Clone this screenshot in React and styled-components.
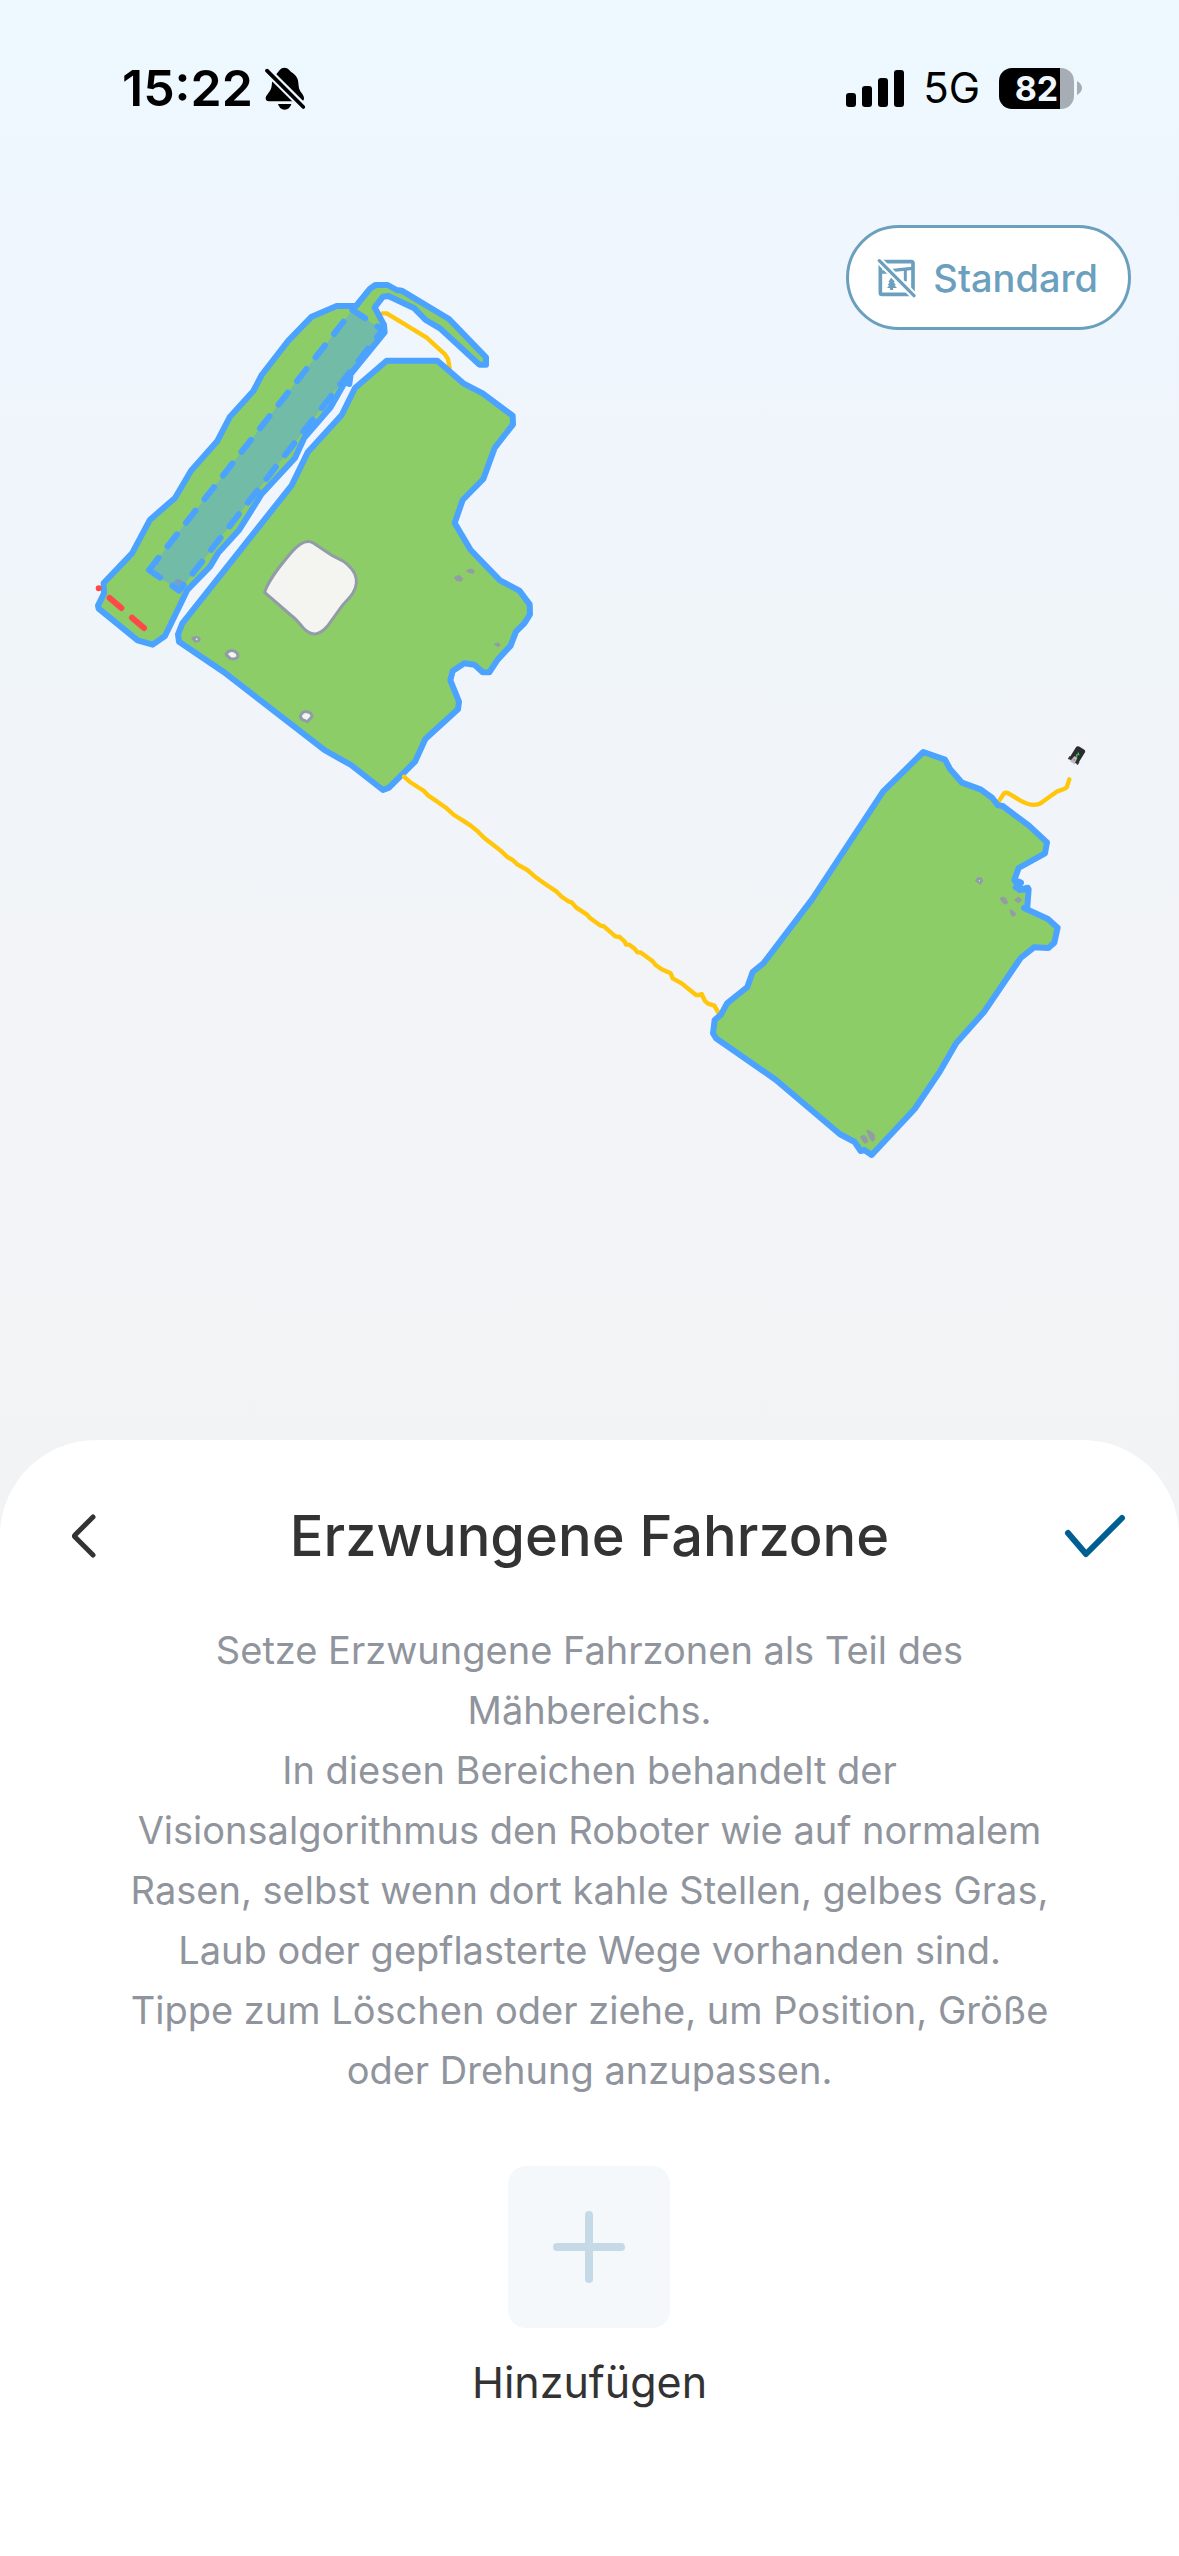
import styled, { createGlobalStyle } from "styled-components";

const GlobalStyle = createGlobalStyle`
  * { box-sizing: border-box; }
  body { margin: 0; }
  button { border: 0; padding: 0; background: none; font: inherit; cursor: pointer; }
`;

const Page = styled.div`
  display: flex;
  flex-direction: column;
  min-height: 100vh;
  font-family: Inter, "Open Sans", sans-serif;
  color: #333333;
  background: linear-gradient(#edf9ff 0, #eff6fd 240px, #f0f5fa 640px, #f2f4f7 1000px, #f2f3f5 1440px);
`;

const Stage = styled.main`
  display: grid;
`;

const MapCanvas = styled.svg`
  grid-area: 1 / 1;
  display: block;
  width: 100%;
  height: auto;
`;

const Overlay = styled.div`
  grid-area: 1 / 1;
  display: flex;
  flex-direction: column;
  gap: 107px;
  padding-top: 58px;
`;

const StatusBar = styled.div`
  display: flex;
  align-items: center;
  justify-content: space-between;
  height: 60px;
  padding: 0 97px 0 122px;
  color: #000000;
`;

const StatusGroup = styled.div`
  display: flex;
  align-items: center;
  gap: ${(p) => p.$gap}px;
`;

const Clock = styled.span`
  font-size: 50px;
  font-weight: 600;
`;

const Network = styled.span`
  font-size: 42px;
  line-height: 60px;
`;

const Battery = styled.span`
  display: flex;
  align-items: center;
  gap: 3px;
`;

const BatteryBody = styled.span`
  width: 75px;
  height: 41px;
  border-radius: 13px;
  text-align: center;
  font-size: 34px;
  font-weight: 700;
  line-height: 41px;
  color: #f0f8ff;
  background: linear-gradient(90deg, #000000 82%, #a6adb5 82%);
`;

const ModeRow = styled.div`
  display: flex;
  justify-content: flex-end;
  padding: 0 48px;
`;

const ModeButton = styled.button`
  display: flex;
  align-items: center;
  gap: 16px;
  height: 105px;
  && {
    padding: 0 30px 0 28px;
    border: 3px solid #6aa0bd;
    background: #ffffff;
    font-size: 38px;
    font-weight: 500;
  }
  border-radius: 53px;
  color: #6aa0bd;
`;

const Sheet = styled.section`
  flex: 1;
  display: flex;
  flex-direction: column;
  align-items: center;
  padding: 56px 48px 96px;
  border-radius: 96px 96px 0 0;
  background: #ffffff;
`;

const SheetHeader = styled.header`
  display: flex;
  align-items: center;
  justify-content: space-between;
  align-self: stretch;
  height: 80px;
`;

const Title = styled.h1`
  margin: 0;
  font-size: 56px;
  font-weight: 500;
  line-height: 80px;
`;

const IconButton = styled.button`
  display: flex;
  align-items: center;
  justify-content: center;
  width: 72px;
  height: 72px;
`;

const Description = styled.p`
  margin: 44px 0 66px;
  font-size: 38px;
  line-height: 60px;
  text-align: center;
  color: #90949c;
`;

const AddButton = styled.button`
  display: flex;
  flex-direction: column;
  align-items: center;
  gap: 24px;
  && {
    font-size: 43px;
    line-height: 60px;
  }
  color: #333333;
`;

const AddTile = styled.span`
  display: flex;
  align-items: center;
  justify-content: center;
  width: 162px;
  height: 162px;
  border-radius: 18px;
  background: #f4f8fb;
`;

const BellOff = () => (
  <svg width="40" height="44" viewBox="0 0 120 132" aria-label="Stumm">
    <path d="M36 22C43 15 46 5 58 5S73 14 82 20C99 31 100 44 101 60C102 78 117 84 117 97Q117 106 108 106H12Q2 106 2 97C2 86 18 78 20 60Q20 42 36 22Z" />
    <path d="M39 114H79Q74 131 59 131T39 114Z" />
    <path d="M6 14L117 124" stroke="#eef7ff" strokeWidth="24" />
    <path d="M6 14L115 123" stroke="#000" strokeWidth="11" strokeLinecap="round" />
  </svg>
);

const Signal = () => (
  <svg width="58" height="37" viewBox="0 0 58 37" aria-label="Signal">
    <rect x="0" y="23" width="10" height="14" rx="3" />
    <rect x="16" y="16" width="10" height="21" rx="3" />
    <rect x="32" y="8" width="10" height="29" rx="3" />
    <rect x="48" y="0" width="10" height="37" rx="3" />
  </svg>
);

const ModeIcon = () => (
  <svg width="40" height="40" viewBox="166 174 120 120" fill="none" stroke="#6aa0bd">
    <rect x="176" y="185" width="98" height="98" rx="5" strokeWidth="11" />
    <path d="M214 211L272 205M178 216H200" strokeWidth="10" />
    <path d="M251 208V244" strokeWidth="9" />
    <path
      d="M209 232L220 246H216L223 256H218L226 264H214V270H205V264H196L203 256H198L204 246H200Z"
      fill="#6aa0bd"
      stroke="none"
    />
    <path d="M166 175L283 293" stroke="#fff" strokeWidth="22" />
    <path d="M173 182L277 287" strokeWidth="10" strokeLinecap="round" />
  </svg>
);

const BLUE = "#4ca2ff";
const GREEN = "#8ccd68";
const GREY = "#929ca6";
const YELLOW = "#ffc60c";

const zoneStyle = { fill: GREEN, stroke: BLUE, strokeWidth: 18, strokeLinejoin: "round" };
const routeStyle = { fill: "none", stroke: YELLOW, strokeWidth: 13, strokeLinejoin: "round", strokeLinecap: "round" };

const strip =
  "820,138 770,138 695,170 625,242 545,345 520,393 450,470 412,543 333,632 285,714 210,779 156,880 71,969 72,1000 54,1037 56,1046 173,1141 218,1154 255,1128 322,990 390,920 415,878 478,809 545,702 645,594 673,533 752,442 795,366 808,372 812,342 914,217 912,195 884,142 909,110 925,108 1003,145 1037,180 1080,205 1198,314 1218,314 1218,292 1107,177 965,92 950,90 923,75 886,75 870,86 828,138";

const mainLawn =
  "920,302 1072,302 1150,370 1208,400 1298,467 1299,493 1244,564 1210,657 1148,720 1124,789 1172,870 1260,961 1318,992 1349,1033 1350,1063 1333,1090 1308,1115 1292,1157 1253,1199 1228,1237 1208,1237 1183,1214 1153,1210 1118,1233 1111,1261 1137,1325 1134,1348 1036,1437 1005,1505 927,1583 909,1590 813,1515 733,1470 430,1235 297,1145 294,1123 307,1090 635,676 683,577 785,465 825,384";

const farLawn =
  "730,96 795,119 810,147 846,188 903,209 937,234 954,256 968,258 1047,317 1101,367 1095,400 1016,444 1003,480 1022,487 1015,502 1018,510 1043,503 1046,508 1042,560 1032,564 1104,597 1133,623 1123,668 1105,684 1062,682 1022,714 912,876 829,969 780,1054 704,1167 575,1305 553,1290 542,1293 524,1266 479,1242 287,1079 108,955 99,940 104,900 123,884 141,850 202,801 218,756 250,730 396,538 609,215";

const corridor =
  "72,50 90,66 132,93 145,107 172,125 200,145 222,165 248,181 272,197 292,213 312,233 343,257 362,272 382,291 398,300 412,313 442,330 465,350 500,375 530,395 545,410 565,424 575,427 588,442 620,463 630,474 660,496 672,499 706,529 719,531 734,545 738,554 748,554 764,566 772,577 781,577 818,604 828,616 845,628 872,640 878,655 905,670 948,705 958,705 965,702 975,723 984,731 1003,737 1015,758";

const LawnMap = () => (
  <MapCanvas viewBox="0 0 1179 1440" role="img" aria-label="Karte der Mähbereiche">
    <g transform="translate(80 260) scale(.33333)">
      <polyline points="908,160 920,160 965,187 1040,233 1095,283 1104,297 1109,325" {...routeStyle} />
      <polygon points={strip} {...zoneStyle} />
      <polygon points={mainLawn} {...zoneStyle} />
      <polygon points="286,967 293,961 303,966 296,975" fill={GREY} stroke={GREY} strokeWidth="9" />
      <path d="M207 930L818 150L908 210L298 992Z" fill="rgba(76, 162, 255, 0.42)" />
      <path
        d="M207 930L818 150L908 210L298 992Z"
        fill="none"
        stroke={BLUE}
        strokeWidth="18"
        strokeLinecap="round"
        strokeLinejoin="round"
        strokeDasharray="46 44"
      />
      <path
        d="M56 985V985M89 1014L124 1044M156 1073L192 1104"
        stroke="#ff4848"
        strokeWidth="18"
        strokeLinecap="round"
      />
      <g fill="#f4f5f1" stroke={GREY} strokeWidth="9" strokeLinejoin="round">
        <path d="M554 997C567 955 610 906 638 873Q674 833 700 849L754 885C773 897 788 899 802 913C825 934 830 949 829 970C825 1004 799 1020 783 1042L742 1099Q705 1142 670 1104C645 1074 648 1078 632 1065Z" />
        <path d="M438 1183Q445 1169 460 1172Q477 1179 473 1192Q466 1200 450 1195Z" />
        <path d="M661 1371Q665 1353 681 1355Q698 1358 695 1371L682 1385L667 1379Z" />
      </g>
      <g fill={GREY}>
        <path d="M333 1134Q344 1125 357 1130Q367 1138 357 1146L344 1148Z" />
        <path d="M1122 954Q1126 945 1139 946L1150 956L1144 965L1130 963Z" />
        <path d="M1158 933Q1166 923 1180 928Q1187 936 1180 941L1168 940Z" />
        <path d="M1242 1154Q1246 1145 1257 1148L1262 1156L1254 1162Z" />
      </g>
      <circle cx="350" cy="1138" r="3" fill="#e4e8e2" />
    </g>

    <g transform="translate(380 760) scale(.33333)">
      <polyline points={corridor} {...routeStyle} />
    </g>

    <g transform="translate(680 720) scale(.33333)">
      <path
        d="M956 245L972 220Q979 215 992 224L1020 241C1050 258 1073 259 1090 244L1132 214L1152 207Q1162 204 1162 196L1168 178"
        {...routeStyle}
      />
      <polygon points={farLawn} {...zoneStyle} />
      <path d="M1006 487L1024 489L1006 502L1032 510" fill="none" stroke={BLUE} strokeWidth="16" strokeLinecap="round" strokeLinejoin="round" />
      <g fill={GREY}>
        <path d="M885 482L892 472H905L910 484L901 495Z" />
        <path d="M959 536Q965 526 977 533L985 548L976 554Q964 548 959 536Z" />
        <path d="M1002 541L1012 531Q1025 531 1025 543L1015 550Z" />
        <path d="M988 569Q997 566 1007 579L1007 586L998 591Q990 584 988 569Z" />
        <path d="M558 1231Q569 1227 584 1244L585 1259L577 1266Q567 1259 565 1247Z" />
        <path d="M540 1250Q552 1239 562 1253L565 1267L555 1271Q545 1263 540 1250Z" />
      </g>
      <circle cx="898" cy="482" r="2" fill="#e4e8e2" />
      <g transform="translate(1190 107) rotate(32)">
        <rect x="-15" y="-27" width="31" height="48" rx="7" fill="#2b2c30" />
        <path d="M-15 12V22M15 12V22" stroke="#3b3436" strokeWidth="5" />
        <path d="M-5 4H5L8 25H-8Z" fill="#b9bbbd" />
        <path d="M-2 -10L4 -6L-2 -2L3 3" fill="none" stroke="#35d65a" strokeWidth="3" />
        <circle cx="0" cy="15" r="2" fill="#c9424a" />
      </g>
    </g>
  </MapCanvas>
);

function App() {
  return (
    <>
      <GlobalStyle />
      <Page>
        <Stage>
          <LawnMap />
          <Overlay>
            <StatusBar>
              <StatusGroup $gap={12}>
                <Clock>15:22</Clock>
                <BellOff />
              </StatusGroup>
              <StatusGroup $gap={19}>
                <Signal />
                <Network>5G</Network>
                <Battery>
                  <BatteryBody>82</BatteryBody>
                  <svg width="5" height="14" viewBox="0 0 5 14">
                    <path d="M0 0Q5 3 5 7T0 14Z" fill="#a6adb5" />
                  </svg>
                </Battery>
              </StatusGroup>
            </StatusBar>
            <ModeRow>
              <ModeButton type="button">
                <ModeIcon />
                Standard
              </ModeButton>
            </ModeRow>
          </Overlay>
        </Stage>

        <Sheet>
          <SheetHeader>
            <IconButton type="button" aria-label="Zurück">
              <svg width="28" height="44" viewBox="0 0 28 44" fill="none" stroke="#333" strokeWidth="5" strokeLinecap="round" strokeLinejoin="round">
                <path d="M23 3L5 21Q4 22 5 23L23 41" />
              </svg>
            </IconButton>
            <Title>Erzwungene Fahrzone</Title>
            <IconButton type="button" aria-label="Bestätigen">
              <svg width="62" height="44" viewBox="0 0 62 44" fill="none" stroke="#005f92" strokeWidth="6" strokeLinecap="round" strokeLinejoin="round">
                <path d="M4 19L22 40L58 4" />
              </svg>
            </IconButton>
          </SheetHeader>
          <Description>
            Setze Erzwungene Fahrzonen als Teil des
            <br />
            Mähbereichs.
            <br />
            In diesen Bereichen behandelt der
            <br />
            Visionsalgorithmus den Roboter wie auf normalem
            <br />
            Rasen, selbst wenn dort kahle Stellen, gelbes Gras,
            <br />
            Laub oder gepflasterte Wege vorhanden sind.
            <br />
            Tippe zum Löschen oder ziehe, um Position, Größe
            <br />
            oder Drehung anzupassen.
          </Description>
          <AddButton type="button">
            <AddTile>
              <svg width="72" height="72" viewBox="0 0 72 72" stroke="#c5d9e6" strokeWidth="8" strokeLinecap="round">
                <path d="M36 4V68M4 36H68" />
              </svg>
            </AddTile>
            Hinzufügen
          </AddButton>
        </Sheet>
      </Page>
    </>
  );
}

export default App;
